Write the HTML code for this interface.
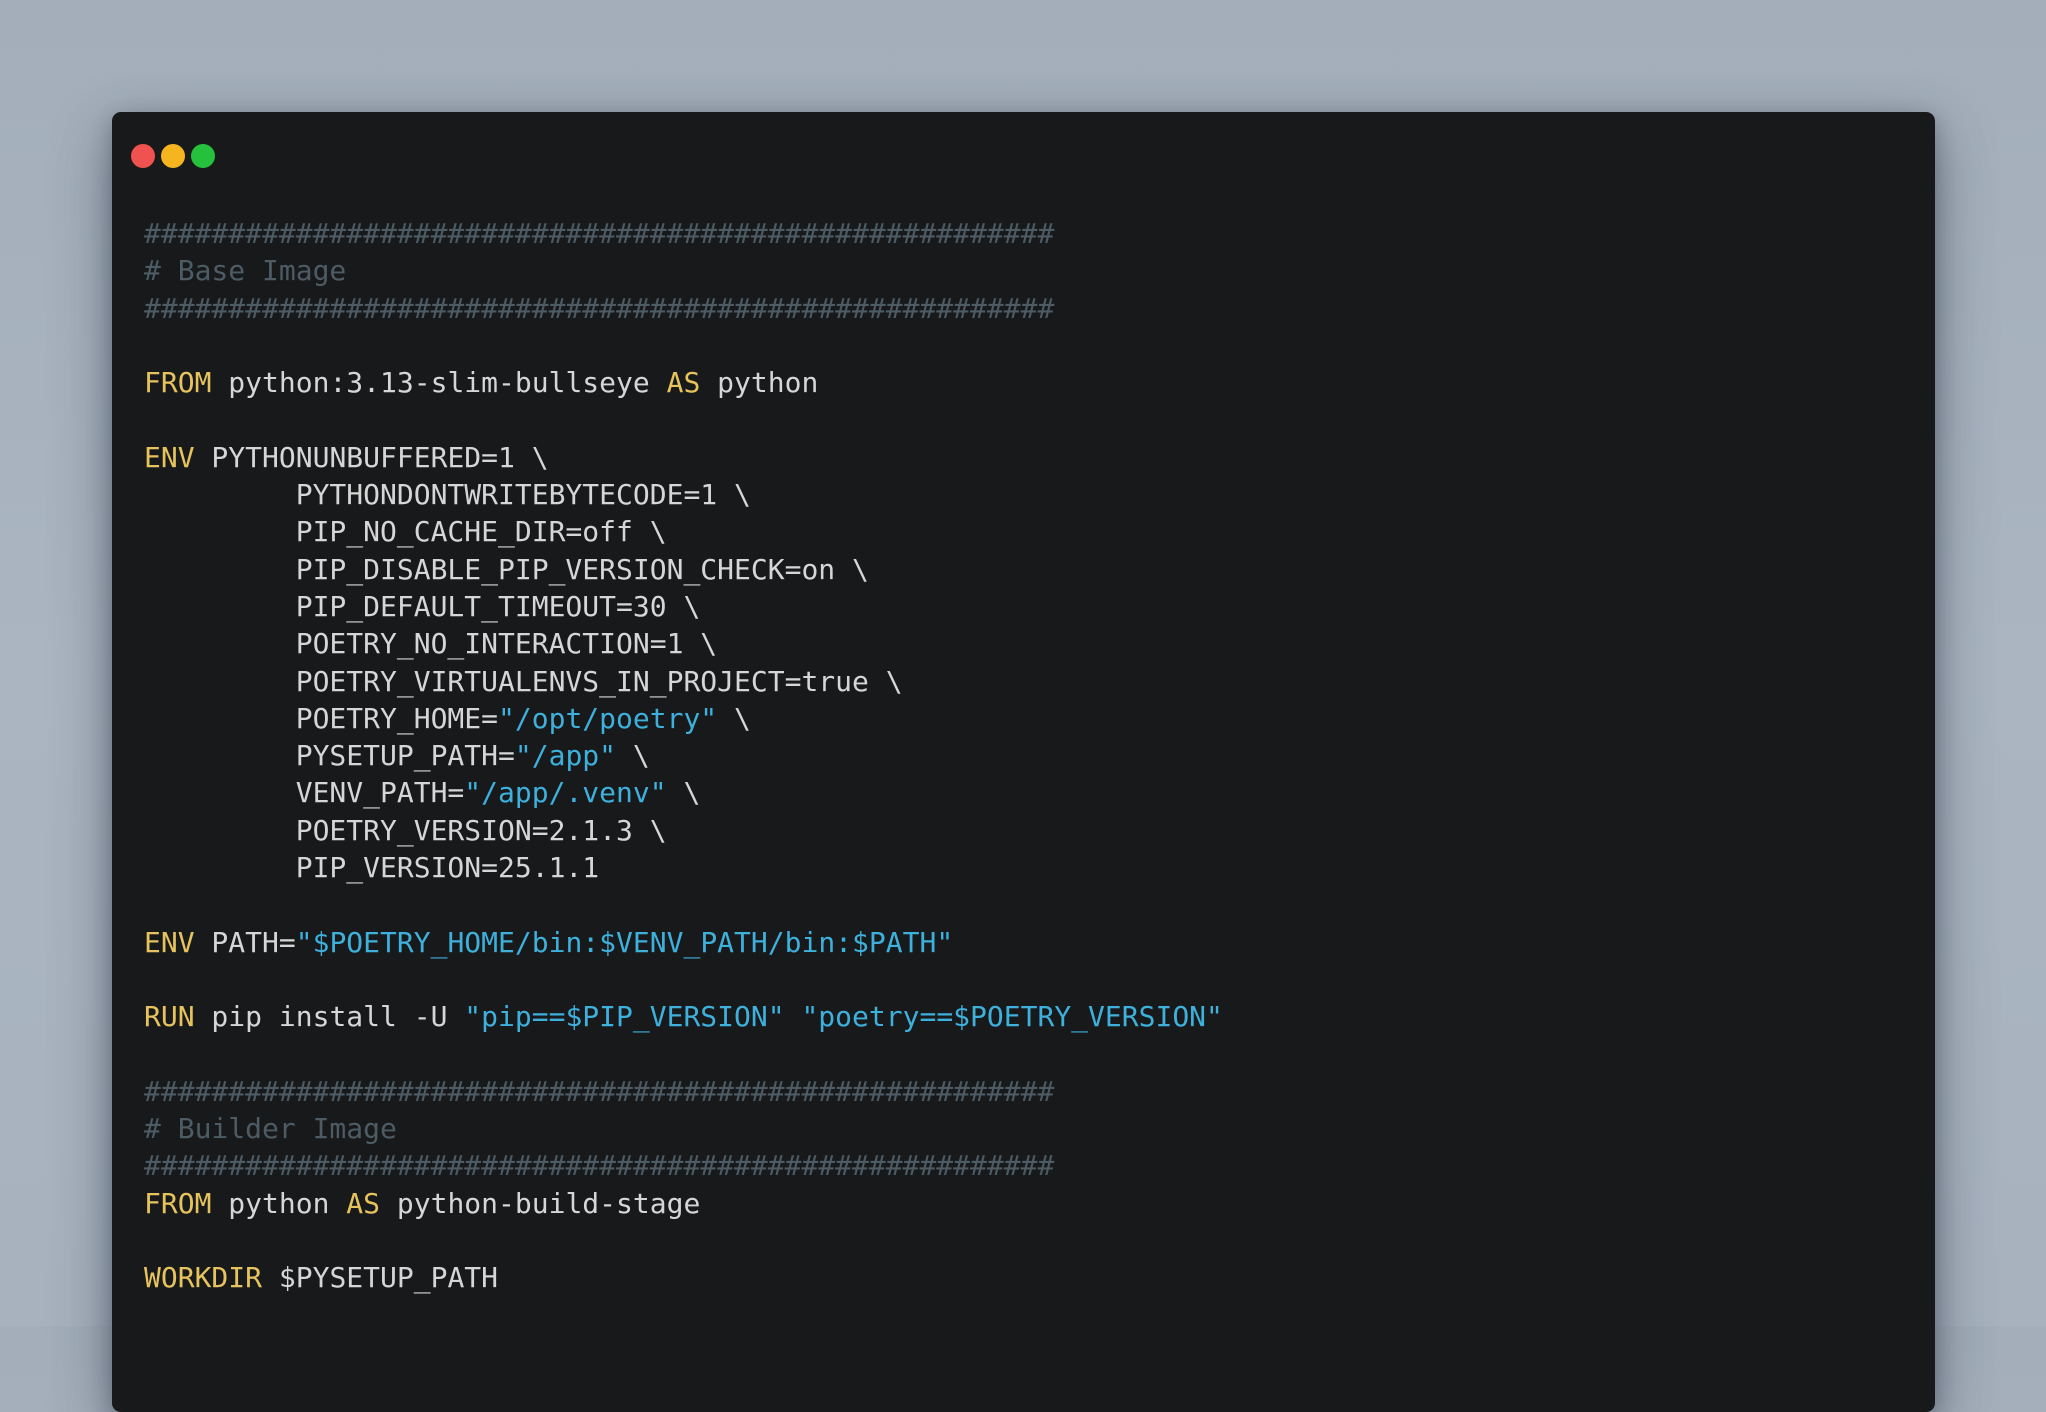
<!DOCTYPE html>
<html><head><meta charset="utf-8"><style>
html,body{margin:0;padding:0;width:2046px;height:1326px;overflow:hidden;background:linear-gradient(180deg,#a3aeba 0%,#aab5c1 50%,#a7b2be 100%);}
.win{position:absolute;left:112px;top:112px;width:1823px;height:1300px;background:#18191b;border-radius:9px;box-shadow:0 20px 60px rgba(30,40,55,0.45),0 6px 20px rgba(30,40,55,0.3);}
.dot{position:absolute;top:144px;width:24px;height:24px;border-radius:50%;}
pre{position:absolute;left:144px;top:215px;margin:0;font-family:"DejaVu Sans Mono","Liberation Mono",monospace;font-size:28px;line-height:37.3px;color:#d6d6d6;}
.k{color:#e6c35c}.s{color:#3eb0dc}.c{color:#4d5b64}
</style></head><body>
<div class="win"></div>
<div class="dot" style="left:131px;background:#f0524f"></div>
<div class="dot" style="left:161px;background:#f6b51f"></div>
<div class="dot" style="left:191px;background:#26c13c"></div>
<pre><span class="c">######################################################</span>
<span class="c"># Base Image</span>
<span class="c">######################################################</span>

<span class="k">FROM</span> python:3.13-slim-bullseye <span class="k">AS</span> python

<span class="k">ENV</span> PYTHONUNBUFFERED=1 \
         PYTHONDONTWRITEBYTECODE=1 \
         PIP_NO_CACHE_DIR=off \
         PIP_DISABLE_PIP_VERSION_CHECK=on \
         PIP_DEFAULT_TIMEOUT=30 \
         POETRY_NO_INTERACTION=1 \
         POETRY_VIRTUALENVS_IN_PROJECT=true \
         POETRY_HOME=<span class="s">"/opt/poetry"</span> \
         PYSETUP_PATH=<span class="s">"/app"</span> \
         VENV_PATH=<span class="s">"/app/.venv"</span> \
         POETRY_VERSION=2.1.3 \
         PIP_VERSION=25.1.1

<span class="k">ENV</span> PATH=<span class="s">"$POETRY_HOME/bin:$VENV_PATH/bin:$PATH"</span>

<span class="k">RUN</span> pip install -U <span class="s">"pip==$PIP_VERSION"</span> <span class="s">"poetry==$POETRY_VERSION"</span>

<span class="c">######################################################</span>
<span class="c"># Builder Image</span>
<span class="c">######################################################</span>
<span class="k">FROM</span> python <span class="k">AS</span> python-build-stage

<span class="k">WORKDIR</span> $PYSETUP_PATH
</pre>
</body></html>
